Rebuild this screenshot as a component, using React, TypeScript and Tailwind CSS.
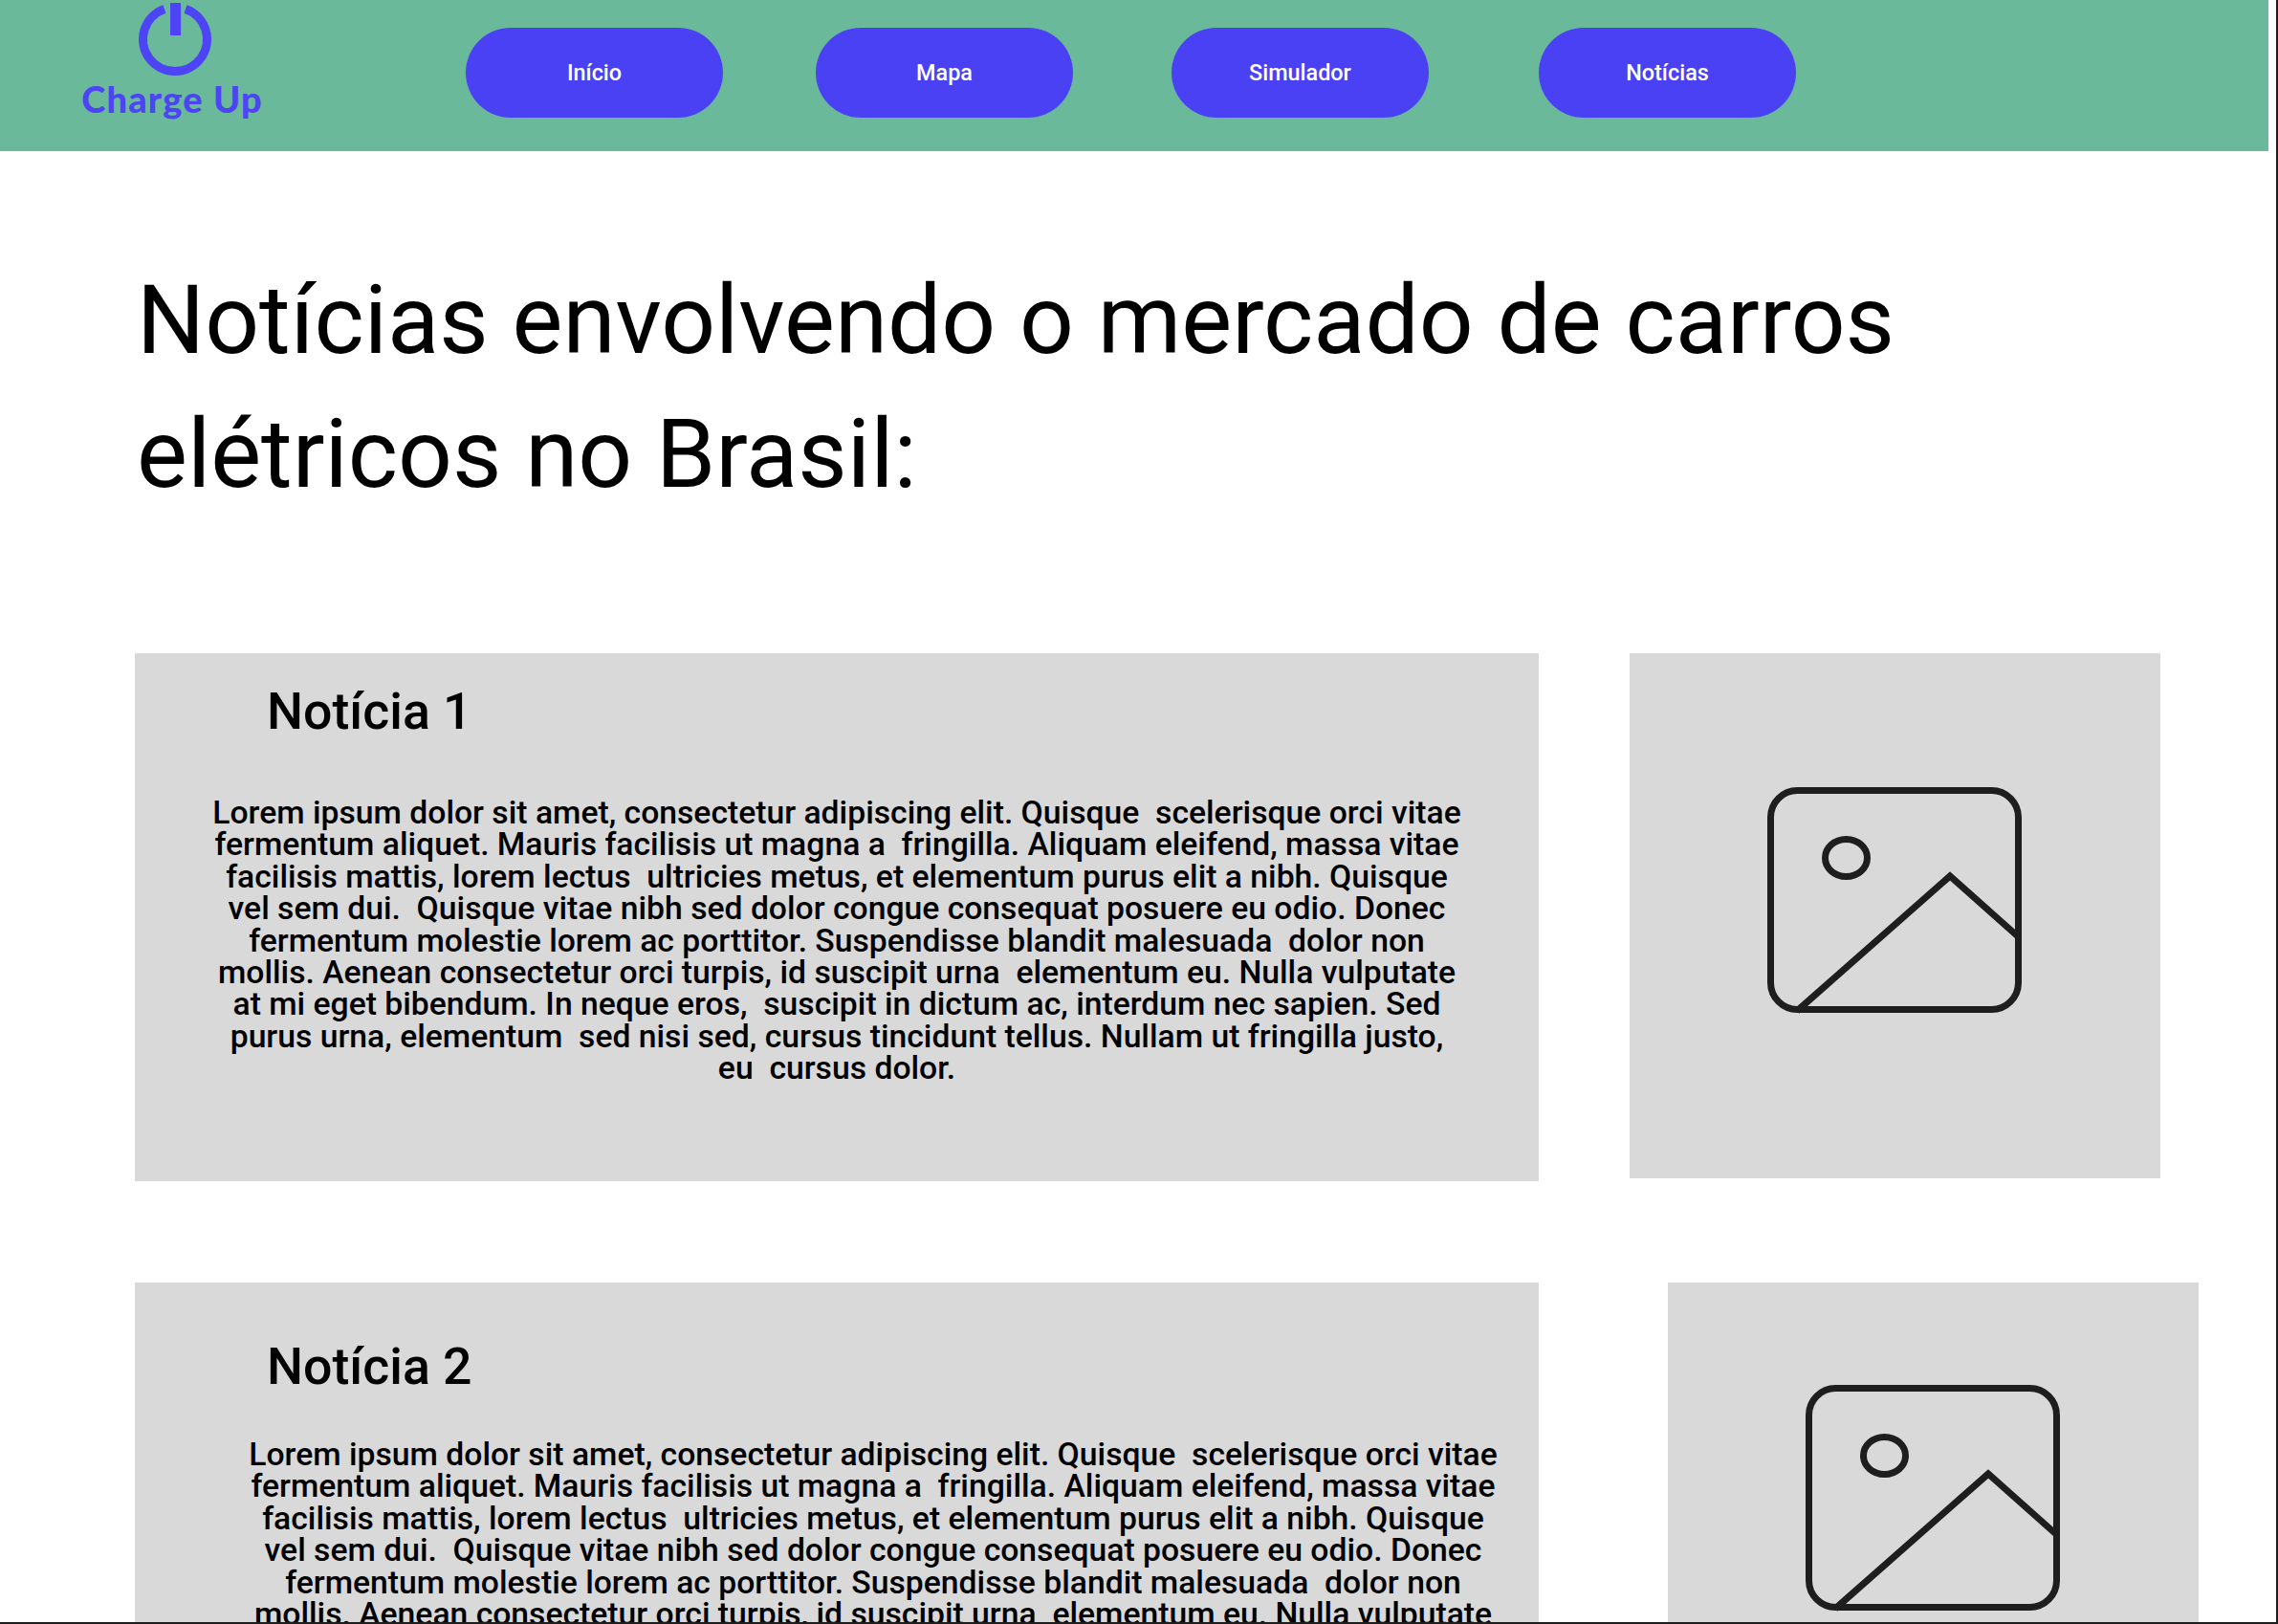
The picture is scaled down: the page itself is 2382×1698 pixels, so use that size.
const lines = [
  "Lorem ipsum dolor sit amet, consectetur adipiscing elit. Quisque  scelerisque orci vitae",
  "fermentum aliquet. Mauris facilisis ut magna a  fringilla. Aliquam eleifend, massa vitae",
  "facilisis mattis, lorem lectus  ultricies metus, et elementum purus elit a nibh. Quisque",
  "vel sem dui.  Quisque vitae nibh sed dolor congue consequat posuere eu odio. Donec",
  "fermentum molestie lorem ac porttitor. Suspendisse blandit malesuada  dolor non",
  "mollis. Aenean consectetur orci turpis, id suscipit urna  elementum eu. Nulla vulputate",
  "at mi eget bibendum. In neque eros,  suscipit in dictum ac, interdum nec sapien. Sed",
  "purus urna, elementum  sed nisi sed, cursus tincidunt tellus. Nullam ut fringilla justo,",
  "eu  cursus dolor.",
];

function ImageIcon() {
  return (
    <svg width="272" height="242" viewBox="0 0 272 242" fill="none" stroke="#1e1e1e" strokeWidth="7">
      <rect x="3.5" y="3.5" width="259" height="229" rx="28" />
      <ellipse cx="82.5" cy="74" rx="22" ry="19.5" />
      <path d="M31 234 L191 93 L263 157" strokeLinejoin="miter" />
    </svg>
  );
}

function Logo() {
  return (
    <div className="w-[186px] ml-[87px] flex flex-col items-center h-[158px] shrink-0">
      <svg width="80" height="80" viewBox="0 0 80 80" fill="none" className="mt-[1px] ml-[6px]">
        <path d="M29 8.4 A33.5 33.5 0 1 0 51 8.4" stroke="#4d44f5" strokeWidth="9" />
        <rect x="35" y="2" width="11" height="34" fill="#4d44f5" />
      </svg>
      <span className="font-['Lato',sans-serif] font-black text-[38px] leading-[36px] tracking-[1.2px] text-[#4d44f5] mt-[4px] whitespace-nowrap">Charge Up</span>
    </div>
  );
}

function NavButton({ label, className }: { label: string; className: string }) {
  return (
    <div className={"w-[269px] h-[94px] rounded-[47px] bg-[#4a41f5] flex items-center justify-center text-white text-[23.4px] font-medium pt-[1px] " + className}>
      {label}
    </div>
  );
}

function NewsCard({ title, titleClass, bodyClass }: { title: string; titleClass: string; bodyClass: string }) {
  return (
    <div className="w-[1468px] h-[552px] bg-[#d9d9d9] shrink-0 text-black">
      <h2 className={"ml-[138px] text-[53.6px] leading-[60px] font-medium " + titleClass}>{title}</h2>
      <p className={"text-[33.7px] leading-[33.4px] font-medium text-center whitespace-pre " + bodyClass}>
        {lines.map((l) => (
          <span key={l} className="block">{l}</span>
        ))}
      </p>
    </div>
  );
}

export default function App() {
  return (
    <div className="w-[2382px] h-[1698px] overflow-hidden bg-white font-['Roboto',sans-serif] border-r-2 border-b-2 border-[#1e1e1e]">
      <header className="w-[2372px] h-[158px] bg-[#69b99a] flex items-start">
        <Logo />
        <div className="flex pt-[29px]">
          <NavButton label="Início" className="ml-[214px]" />
          <NavButton label="Mapa" className="ml-[97px]" />
          <NavButton label="Simulador" className="ml-[103px]" />
          <NavButton label="Notícias" className="ml-[115px]" />
        </div>
      </header>
      <h1 className="ml-[143px] mt-[107px] text-[99.8px] leading-[140px] font-normal text-black">
        Notícias envolvendo o mercado de carros<br />elétricos no Brasil:
      </h1>
      <section className="mt-[138px] ml-[141px]">
        <div className="flex items-start">
          <NewsCard title="Notícia 1" titleClass="pt-[31px]" bodyClass="mt-[59px]" />
          <div className="ml-[95px] w-[555px] h-[549px] bg-[#d9d9d9] flex justify-center pt-[140px] pl-[4px]">
            <ImageIcon />
          </div>
        </div>
        <div className="flex items-start mt-[106px]">
          <NewsCard title="Notícia 2" titleClass="pt-[58px]" bodyClass="mt-[45px] pl-[76px]" />
          <div className="ml-[135px] w-[555px] h-[549px] bg-[#d9d9d9] flex justify-center pt-[107px] pl-[4px]">
            <ImageIcon />
          </div>
        </div>
      </section>
    </div>
  );
}
